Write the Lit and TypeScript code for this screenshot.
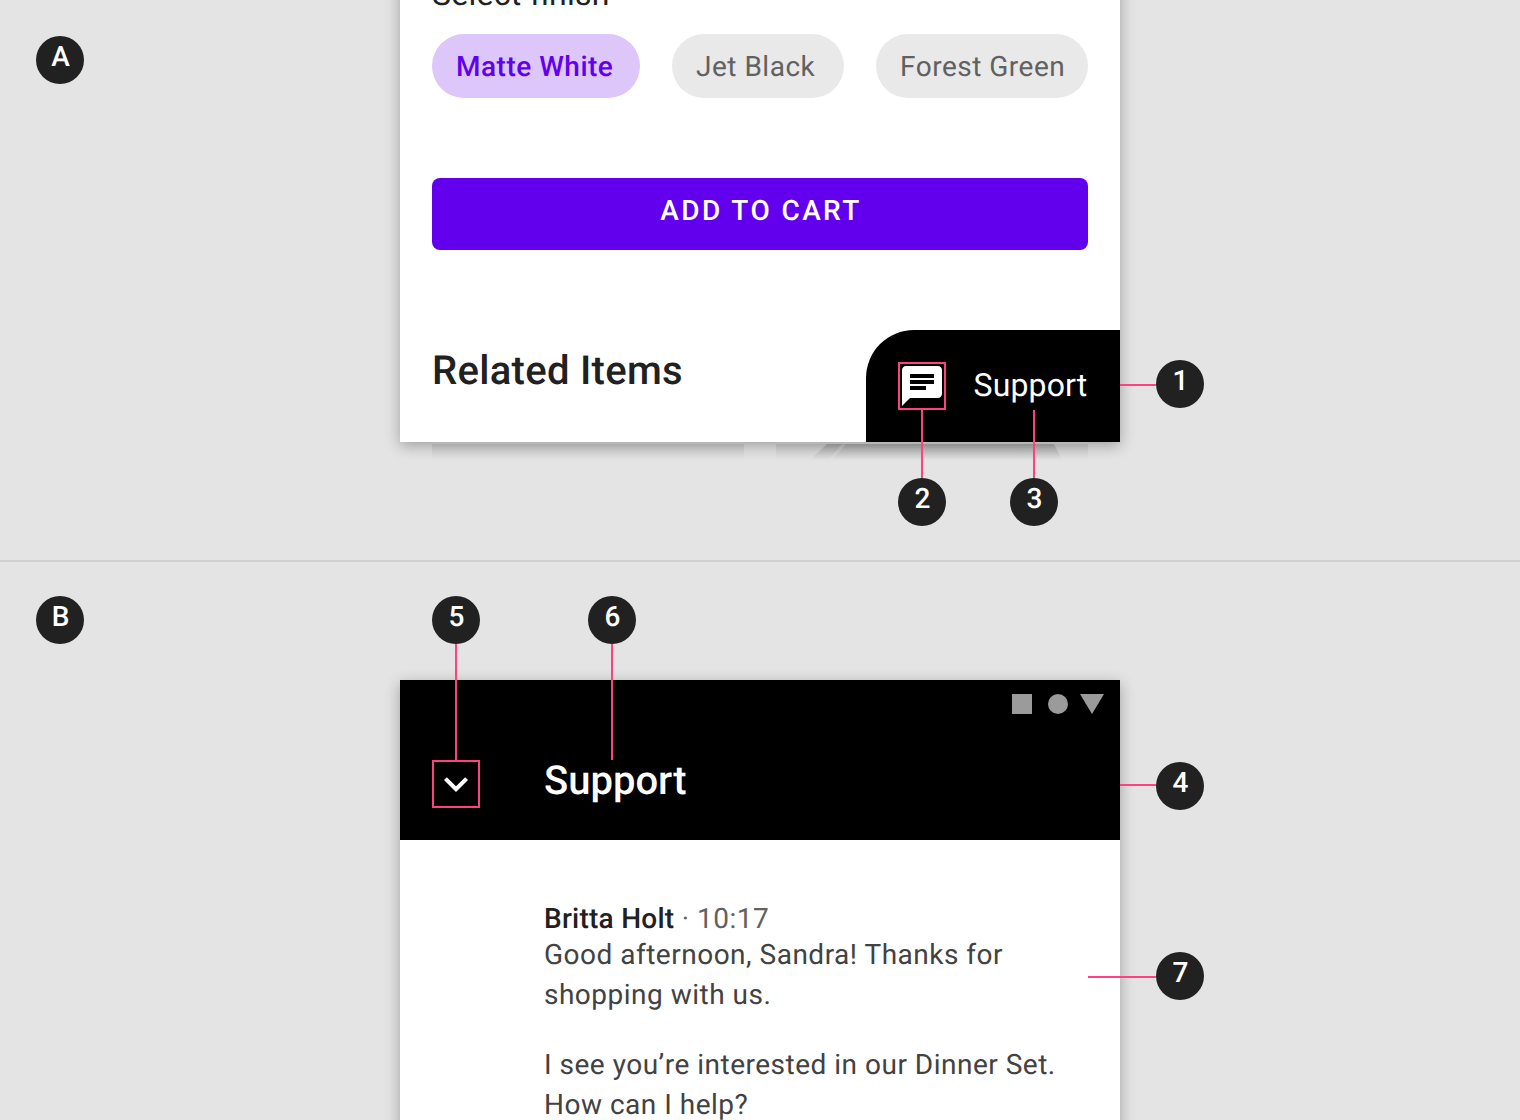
import { LitElement, css, html, svg } from 'lit';
import { customElement } from 'lit/decorators.js';

const BADGES = [
  { label: 'A', x: 36, y: 36 },
  { label: 'B', x: 36, y: 596 },
  { label: '1', x: 1156, y: 360 },
  { label: '2', x: 898, y: 478 },
  { label: '3', x: 1010, y: 478 },
  { label: '4', x: 1156, y: 762 },
  { label: '5', x: 432, y: 596 },
  { label: '6', x: 588, y: 596 },
  { label: '7', x: 1156, y: 952 },
];

// x, y, width, height of each leader line
const LINES = [
  [1120, 384, 36, 2],
  [921, 410, 2, 68],
  [1033, 410, 2, 68],
  [1120, 784, 36, 2],
  [455, 644, 2, 116],
  [611, 644, 2, 116],
  [1088, 976, 68, 2],
];

const BOXES = [
  [898, 362],
  [432, 760],
];

const chatIcon = svg`<path fill="#fff" d="M20 2H4c-1.1 0-2 .9-2 2v18l4-4h14c1.1 0 2-.9 2-2V4c0-1.1-.9-2-2-2zM6 9h12v2H6V9zm8 5H6v-2h8v2zm4-6H6V6h12v2z"/>`;
const chevronIcon = svg`<path fill="#fff" d="M16.59 8.59L12 13.17 7.41 8.59 6 10l6 6 6-6z"/>`;

@customElement('app-root')
export class AppRoot extends LitElement {
  static styles = css`
    :host {
      display: block;
      position: relative;
      width: 1520px;
      height: 1120px;
      overflow: hidden;
      background: #e4e4e4;
      font-family: Roboto, sans-serif;
      color: #212121;
      text-rendering: geometricPrecision;
    }

    .section-a {
      display: flex;
      flex-direction: column;
      align-items: center;
      justify-content: flex-end;
      box-sizing: border-box;
      height: 562px;
      padding-bottom: 100px;
      overflow: hidden;
      border-bottom: 2px solid #cfcfcf;
    }

    .section-b {
      display: flex;
      flex-direction: column;
      align-items: center;
      padding-top: 118px;
    }

    .card {
      position: relative;
      z-index: 1;
      flex-shrink: 0;
      box-sizing: border-box;
      width: 720px;
      padding: 0 32px;
      background: #fff;
      box-shadow: 0 4px 14px rgba(0, 0, 0, 0.3);
    }

    .finish {
      font-size: 32px;
      line-height: 40px;
      letter-spacing: 0.25px;
      margin-bottom: 20px;
    }

    .chips {
      display: grid;
      grid-template-columns: 208px 172px 212px;
      gap: 32px;
    }

    .chip {
      height: 64px;
      line-height: 65px;
      padding-left: 24px;
      border-radius: 32px;
      font-size: 28px;
      letter-spacing: 0.5px;
      background: #e9e9e9;
      color: #616161;
      white-space: nowrap;
    }

    .chip.active {
      background: #dcc6fa;
      color: #6200ee;
      font-weight: 500;
    }

    .cart {
      box-sizing: border-box;
      height: 72px;
      margin-top: 80px;
      padding: 0 0 8px 2px;
      border-radius: 8px;
      background: #6200ee;
      color: #fff;
      font-size: 28px;
      font-weight: 500;
      line-height: 65px;
      letter-spacing: 2.4px;
      text-align: center;
    }

    .related {
      height: 192px;
      padding-top: 81px;
      box-sizing: border-box;
      font-size: 40px;
      font-weight: 500;
      line-height: 80px;
      letter-spacing: 0.3px;
    }

    .fab {
      position: absolute;
      right: 0;
      bottom: 0;
      display: flex;
      align-items: center;
      gap: 27.5px;
      box-sizing: border-box;
      width: 254px;
      height: 112px;
      padding-left: 32px;
      border-top-left-radius: 48px;
      background: #000;
      color: #fff;
      font-size: 32px;
      letter-spacing: 0.15px;
    }

    .fab span {
      padding-bottom: 2px;
    }

    .fab svg,
    .toolbar svg {
      flex: none;
      width: 48px;
      height: 48px;
    }

    .peek {
      display: flex;
      flex-shrink: 0;
      gap: 32px;
      width: 656px;
      height: 18px;
    }

    .peek div {
      flex: 1;
      margin-top: 2px;
      background: linear-gradient(rgba(90, 90, 90, 0.14), rgba(90, 90, 90, 0));
    }

    .peek svg {
      display: block;
      width: 100%;
      height: 16px;
    }

    .sheet {
      flex-shrink: 0;
      width: 720px;
      background: #fff;
      box-shadow: 0 4px 14px rgba(0, 0, 0, 0.3);
    }

    .app-bar {
      box-sizing: border-box;
      height: 160px;
      padding-top: 14px;
      background: #000;
      color: #fff;
    }

    .status {
      display: flex;
      justify-content: flex-end;
      align-items: flex-start;
      gap: 16px;
      height: 66px;
      padding-right: 16px;
    }

    .status .square {
      width: 20px;
      height: 20px;
      background: #9b9b9b;
    }

    .status .circle {
      width: 20px;
      height: 20px;
      margin-right: -4px;
      border-radius: 50%;
      background: #9b9b9b;
    }

    .status .tri {
      border-left: 12px solid transparent;
      border-right: 12px solid transparent;
      border-top: 20px solid #9b9b9b;
    }

    .toolbar {
      display: flex;
      align-items: flex-start;
      gap: 64px;
      padding-left: 32px;
      font-size: 40px;
      font-weight: 500;
      line-height: 42px;
    }

    .chat {
      box-sizing: border-box;
      height: 300px;
      padding: 63px 32px 0 144px;
      font-size: 28px;
      line-height: 40px;
      letter-spacing: 0.5px;
      color: #424242;
    }

    .meta {
      line-height: 32px;
      color: #616161;
    }

    .meta b {
      font-weight: 500;
      letter-spacing: 0.25px;
      color: #212121;
    }

    .chat p {
      margin: 0 0 30px;
    }

    .badge {
      position: absolute;
      z-index: 3;
      box-sizing: border-box;
      width: 48px;
      height: 48px;
      padding-left: 1px;
      border-radius: 50%;
      background: #212121;
      color: #fff;
      font-size: 28px;
      font-weight: 500;
      line-height: 42px;
      text-align: center;
    }

    .line {
      position: absolute;
      z-index: 2;
      background: #ff4081;
    }

    .box {
      position: absolute;
      z-index: 2;
      box-sizing: border-box;
      width: 48px;
      height: 48px;
      border: 2px solid #ff4081;
    }
  `;

  render() {
    return html`
      <section class="section-a">
        <div class="card">
          <div class="finish">Select finish</div>
          <div class="chips">
            <div class="chip active">Matte White</div>
            <div class="chip">Jet Black</div>
            <div class="chip">Forest Green</div>
          </div>
          <div class="cart">ADD TO CART</div>
          <div class="related">Related Items</div>
          <div class="fab">
            <svg viewBox="0 0 24 24">${chatIcon}</svg>
            <span>Support</span>
          </div>
        </div>
        <div class="peek">
          <div></div>
          <div>
            <svg viewBox="0 0 312 16">
              <defs>
                <linearGradient id="fade" x1="0" y1="0" x2="0" y2="1">
                  <stop offset="0" stop-color="#555" stop-opacity="0.28" />
                  <stop offset="1" stop-color="#555" stop-opacity="0" />
                </linearGradient>
              </defs>
              <polygon points="51,0 278,0 286,16 34,16" fill="url(#fade)" />
              <polygon points="66,0 70,0 56,16 52,16" fill="#e4e4e4" opacity="0.35" />
            </svg>
          </div>
        </div>
      </section>

      <section class="section-b">
        <div class="sheet">
          <div class="app-bar">
            <div class="status">
              <div class="square"></div>
              <div class="circle"></div>
              <div class="tri"></div>
            </div>
            <div class="toolbar">
              <svg viewBox="0 0 24 24">${chevronIcon}</svg>
              <span>Support</span>
            </div>
          </div>
          <div class="chat">
            <div class="meta"><b>Britta Holt</b> · 10:17</div>
            <p>Good afternoon, Sandra! Thanks for shopping with us.</p>
            <p>I see you’re interested in our Dinner Set. How can I help?</p>
          </div>
        </div>
      </section>

      ${LINES.map(
        ([x, y, w, h]) =>
          html`<div class="line" style="left:${x}px;top:${y}px;width:${w}px;height:${h}px"></div>`
      )}
      ${BOXES.map(([x, y]) => html`<div class="box" style="left:${x}px;top:${y}px"></div>`)}
      ${BADGES.map(
        (b) => html`<div class="badge" style="left:${b.x}px;top:${b.y}px">${b.label}</div>`
      )}
    `;
  }
}
